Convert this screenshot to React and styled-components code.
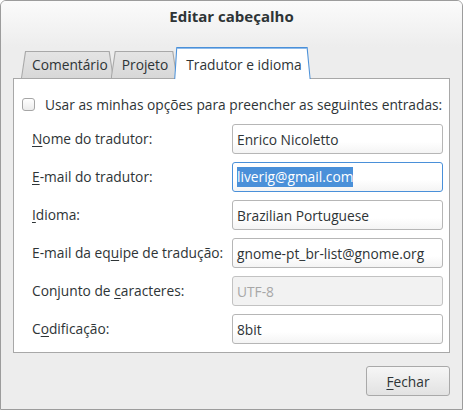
import React from 'react';
import styled, { createGlobalStyle } from 'styled-components';

const GlobalStyle = createGlobalStyle`
  html, body {
    margin: 0;
    padding: 0;
    background: #ffffff;
  }
  body {
    font-family: 'Open Sans', 'Noto Sans', sans-serif;
    font-size: 13.75px;
    color: #2e3436;
  }
`;

const Window = styled.div`
  width: 463px;
  height: 410px;
  box-sizing: border-box;
  border: 1px solid #9c9c9c;
  border-radius: 6px 6px 0 0;
  background: #ededed;
  display: flex;
  flex-direction: column;
  overflow: hidden;
`;

const TitleBar = styled.div`
  height: 46px;
  flex-shrink: 0;
  display: flex;
  justify-content: center;
  padding-top: 6px;
  box-sizing: border-box;
  background: linear-gradient(to bottom, #fbfbfb 0%, #ededed 100%);
  font-weight: bold;
  font-size: 15px;
  line-height: 18px;
  color: #2e3436;
`;

const Body = styled.div`
  padding: 0 12px 0 12px;
  display: flex;
  flex-direction: column;
`;

const TabStrip = styled.div`
  display: flex;
  align-items: flex-end;
  padding-left: 8px;
  height: 32px;
  margin-bottom: -1px;
  position: relative;
  z-index: 1;
`;

const Tab = styled.div`
  position: relative;
  height: ${p => (p.$active ? '32px' : '27px')};
  margin-bottom: ${p => (p.$active ? '0' : '1px')};
  margin-left: ${p => (p.$first ? '0' : '-3px')};
  padding: 0 ${p => (p.$active ? '9px' : p.$wide ? '9px' : '6px')} 0 ${p => (p.$active ? '12px' : '11px')};
  display: flex;
  align-items: center;
  box-sizing: border-box;
  z-index: ${p => (p.$active ? 3 : 1)};
  line-height: 18px;
  padding-top: ${p => (p.$active ? '3px' : '1px')};

  &::before {
    content: '';
    position: absolute;
    inset: 0;
    background: ${p => (p.$active ? '#4a90d9' : '#a8a8a8')};
    clip-path: polygon(
      ${p => (p.$active ? '2px' : '4px')} 0,
      calc(100% - ${p => (p.$active ? '3px' : '4px')}) 0,
      100% 100%,
      0 100%
    );
    border-radius: 3px 3px 0 0;
  }

  &::after {
    content: '';
    position: absolute;
    inset: 1px 1px 0 1px;
    background: ${p =>
      p.$active
        ? '#ffffff'
        : 'linear-gradient(to bottom, #e4e4e4 0%, #d8d8d8 100%)'};
    clip-path: polygon(
      ${p => (p.$active ? '2px' : '4px')} 0,
      calc(100% - ${p => (p.$active ? '3px' : '4px')}) 0,
      100% 100%,
      0 100%
    );
    border-radius: 2px 2px 0 0;
  }

  span {
    position: relative;
    z-index: 1;
  }
`;

const ActiveEdge = styled.div`
  position: absolute;
  left: 3px;
  right: 4px;
  top: 1px;
  height: 1px;
  background: #8fbbea;
  z-index: 1;
`;

const Panel = styled.div`
  background: #ffffff;
  border: 1px solid #a8a8a8;
  height: 275px;
  box-sizing: border-box;
  padding: 15px 6px 0 18px;
  display: flex;
  flex-direction: column;
`;

const CheckRow = styled.label`
  display: flex;
  align-items: center;
  height: 20px;
  margin-left: -10px;
  gap: 10px;
  margin-bottom: 10px;
`;

const Check = styled.span`
  width: 13px;
  height: 13px;
  box-sizing: border-box;
  border: 1px solid #a6a6a6;
  border-radius: 3px;
  background: linear-gradient(to bottom, #ffffff, #ececec);
  flex-shrink: 0;
`;

const Form = styled.div`
  display: grid;
  grid-template-columns: 200px 211px;
  row-gap: 8px;
  align-items: center;
`;

const Label = styled.span`
  line-height: 18px;

  u {
    text-decoration: underline;
    text-underline-offset: 2px;
  }
`;

const Entry = styled.div`
  height: 30px;
  box-sizing: border-box;
  border: 1px solid ${p => (p.$focus ? '#4a90d9' : p.$disabled ? '#c2c2c2' : '#b6b6b6')};
  border-radius: 3px;
  background: ${p =>
    p.$disabled
      ? '#f2f2f2'
      : 'linear-gradient(to bottom, #ffffff 0%, #ffffff 60%, #f4f4f4 100%)'};
  color: ${p => (p.$disabled ? '#a7a7a7' : '#2e3436')};
  display: flex;
  align-items: center;
  padding-left: 4px;
  white-space: nowrap;
  overflow: hidden;
`;

const Selected = styled.span`
  background: #4a90d9;
  color: #ffffff;
  line-height: 20px;
`;

const Footer = styled.div`
  display: flex;
  justify-content: flex-end;
  padding: 13px 12px 0 0;
`;

const Button = styled.button`
  width: 84px;
  height: 30px;
  box-sizing: border-box;
  border: 1px solid #a9a9a9;
  border-radius: 3px;
  background: linear-gradient(to bottom, #f6f6f6 0%, #e2e2e2 100%);
  font-family: inherit;
  font-size: 13.75px;
  color: #2e3436;
  padding: 0;

  u {
    text-underline-offset: 2px;
  }
`;

const rows = [
  { label: <><u>N</u>ome do tradutor:</>, value: 'Enrico Nicoletto' },
  { label: <><u>E</u>-mail do tradutor:</>, value: 'liverig@gmail.com', focus: true },
  { label: <><u>I</u>dioma:</>, value: 'Brazilian Portuguese' },
  { label: <>E-mail da eq<u>u</u>ipe de tradução:</>, value: 'gnome-pt_br-list@gnome.org' },
  { label: <>Conjunto de <u>c</u>aracteres:</>, value: 'UTF-8', disabled: true },
  { label: <>C<u>o</u>dificação:</>, value: '8bit' },
];

export default function App() {
  return (
    <>
      <GlobalStyle />
      <Window>
        <TitleBar>Editar cabeçalho</TitleBar>
        <Body>
          <TabStrip>
            <Tab $first><span>Comentário</span></Tab>
            <Tab $wide><span>Projeto</span></Tab>
            <Tab $active>
              <ActiveEdge />
              <span>Tradutor e idioma</span>
            </Tab>
          </TabStrip>
          <Panel>
            <CheckRow>
              <Check />
              <span>Usar as minhas opções para preencher as seguintes entradas:</span>
            </CheckRow>
            <Form>
              {rows.map((r, i) => (
                <React.Fragment key={i}>
                  <Label>{r.label}</Label>
                  <Entry $focus={r.focus} $disabled={r.disabled}>
                    {r.focus ? <Selected>{r.value}</Selected> : r.value}
                  </Entry>
                </React.Fragment>
              ))}
            </Form>
          </Panel>
        </Body>
        <Footer>
          <Button><u>F</u>echar</Button>
        </Footer>
      </Window>
    </>
  );
}
